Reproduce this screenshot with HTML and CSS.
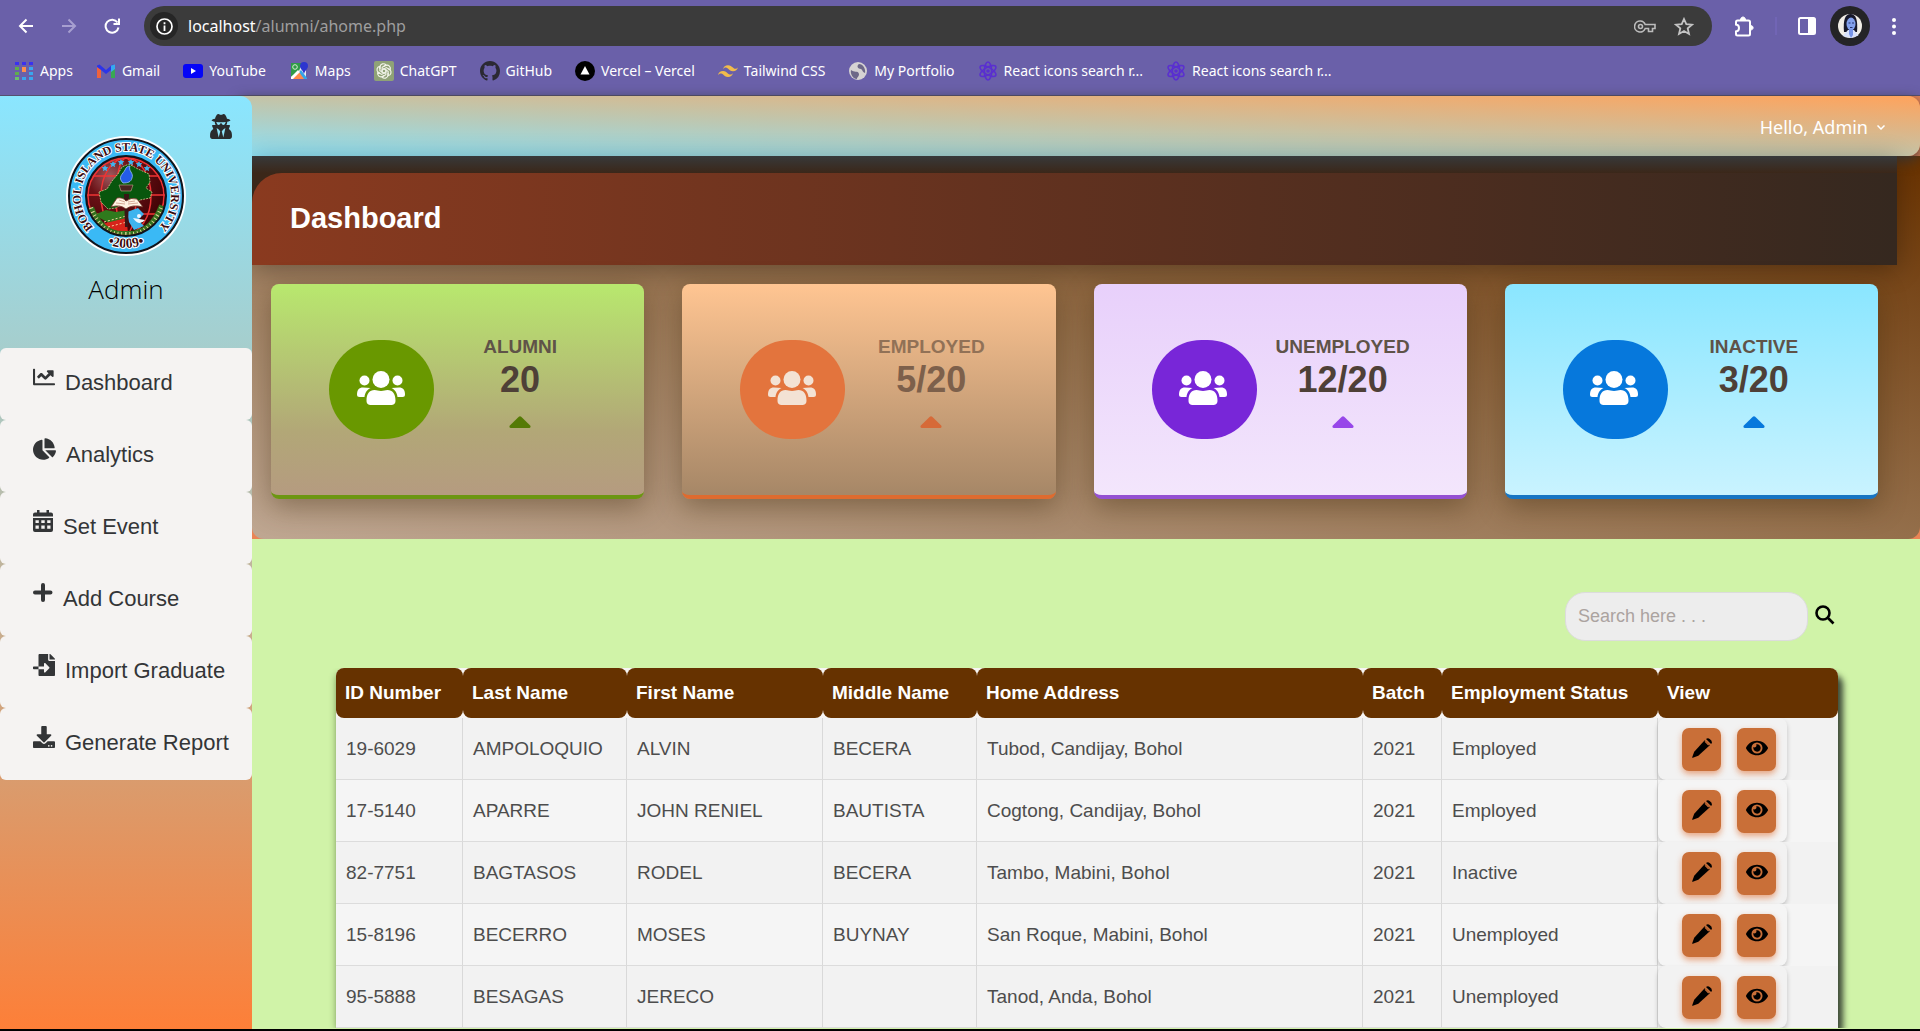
FILE: index.html
```html
<!DOCTYPE html>
<html lang="en">
<head>
<meta charset="utf-8">
<meta name="viewport" content="width=device-width, initial-scale=1">
<title>Alumni Dashboard</title>
<link rel="stylesheet" href="styles.css">
</head>
<body>
<svg class="sprite" width="0" height="0" aria-hidden="true">
  <symbol id="people" viewBox="0 0 48 34">
    <circle cx="24" cy="8.500" r="8.500"/><circle cx="7.500" cy="9.500" r="5"/><circle cx="40.500" cy="9.500" r="5"/>
    <path d="M9.500 29.500C9.500 23 12.500 19 17.500 19C20 19 21 20 24 20S28 19 30.500 19C35.500 19 38.500 23 38.500 29.500C38.500 33 36.500 34 34 34H14C11.500 34 9.500 33 9.500 29.500Z"/>
    <path d="M13.500 17C9.500 19 8 22 7.500 26H2.500C.8 26 0 25.200 0 23.500C0 19 2 16.500 6 16.500Z"/>
    <path d="M34.500 17C38.500 19 40 22 40.500 26H45.500C47.200 26 48 25.200 48 23.500C48 19 46 16.500 42 16.500Z"/>
  </symbol>
  <symbol id="caret" viewBox="0 0 22 12"><path d="M9.800.7Q11-.4 12.200.7L21.400 9.700Q22 12 20 12H2Q0 12 .6 9.700Z"/></symbol>
  <symbol id="pen" viewBox="0 0 20 20"><path d="M14 .9L16.500 3.400L19.100 6Q20.600 4 19 2.300L17.700 1Q16-.5 14 .9Z"/><path d="M12.700 2.200L17.800 7.300L6.300 17.800L.8 19.800Q0 20 .2 19.200L2.200 13.700Z"/><path d="M13 3.300L16.700 7" stroke="#c96f38" stroke-width="1.200"/></symbol>
  <symbol id="eye" viewBox="0 0 576 512"><path d="M572.520 241.400C518.290 135.590 410.930 64 288 64S57.680 135.640 3.480 241.410a32.350 32.350 0 0 0 0 29.190C57.710 376.410 165.070 448 288 448s230.320-71.640 284.520-177.410a32.350 32.350 0 0 0 0-29.190zM288 400a144 144 0 1 1 144-144 143.930 143.930 0 0 1-144 144zm0-240a95.310 95.310 0 0 0-25.310 3.790 47.850 47.850 0 0 1-66.900 66.900A95.780 95.780 0 1 0 288 160z"/></symbol>
  <symbol id="atom" viewBox="0 0 20 20"><g fill="none" stroke="#5a2fd0" stroke-width="1.600"><ellipse cx="10" cy="10" rx="3.600" ry="9"/><ellipse cx="10" cy="10" rx="3.600" ry="9" transform="rotate(60 10 10)"/><ellipse cx="10" cy="10" rx="3.600" ry="9" transform="rotate(120 10 10)"/></g><circle cx="10" cy="10" r="1.800" fill="#5a2fd0"/></symbol>
</svg>

<header class="chrome">
  <div class="toolbar">
    <div class="history">
      <button class="tool" aria-label="Back"><svg width="16" height="16" viewBox="0 0 16 16" fill="none" stroke="#fff" stroke-width="2"><path d="M15 8H2M8.500 1.500L2 8L8.500 14.500"/></svg></button>
      <button class="tool" aria-label="Forward"><svg width="16" height="16" viewBox="0 0 16 16" fill="none" stroke="#a79fd0" stroke-width="2"><path d="M1 8H14M7.500 1.500L14 8L7.500 14.500"/></svg></button>
      <button class="tool" aria-label="Reload"><svg width="16" height="16" viewBox="0 0 16 16" fill="none" stroke="#fff" stroke-width="2"><path d="M13.500 4.500A6.500 6.500 0 1 0 14.500 9.500"/><path d="M15 .5V6H9.500"/></svg></button>
    </div>
    <div class="omnibox">
      <button class="site-info" aria-label="Site information"><svg width="17" height="17" viewBox="0 0 17 17"><circle cx="8.500" cy="8.500" r="7.500" fill="none" stroke="#fff" stroke-width="1.700"/><path d="M7.600 7.500h1.800V13H7.600zM7.600 4.300h1.800v1.900H7.600z" fill="#fff"/></svg></button>
      <div class="url" role="textbox" aria-label="Address">localhost<span class="path">/alumni/ahome.php</span></div>
      <button class="tool" aria-label="Passwords"><svg width="22" height="13" viewBox="0 0 22 13" fill="none" stroke="#bcbcbc" stroke-width="1.600"><path d="M6.500 1A5.500 5.500 0 1 0 11.200 8.500H14.500V11.500H18.500V8.500H21V4.500H11.200A5.500 5.500 0 0 0 6.500 1Z"/><circle cx="6.500" cy="6.500" r="2"/></svg></button>
      <button class="tool" aria-label="Bookmark"><svg width="20" height="19" viewBox="0 0 20 19" fill="none" stroke="#c4c4c4" stroke-width="1.800"><path d="M10 2L12.300 7.100L18 7.700L13.700 11.400L15 17L10 14L5 17L6.300 11.400L2 7.700L7.700 7.100Z"/></svg></button>
    </div>
    <div class="extras">
      <button class="tool" aria-label="Extensions"><svg width="20" height="21" viewBox="0 0 20 21" fill="none" stroke="#fff" stroke-width="2"><path d="M3.500 4.500H14.500Q16 4.500 16 6V18Q16 19.500 14.500 19.500H3.500Q2 19.500 2 18V15.500C6 15 6 9 2 8.500V6Q2 4.500 3.500 4.500Z"/><path d="M6.500 4C6.500 0 11.500 0 11.500 4ZM16.500 9.500C20 9.500 20 14 16.500 14Z" fill="#fff" stroke-width="1"/></svg></button>
      <span class="divider"></span>
      <button class="tool" aria-label="Side panel"><svg width="18" height="18" viewBox="0 0 18 18"><rect x="1" y="1" width="16" height="16" rx="1.500" fill="none" stroke="#fff" stroke-width="2"/><path d="M10 1h7v16h-7z" fill="#fff"/></svg></button>
      <button class="tool" aria-label="Profile"><svg width="40" height="40" viewBox="0 0 40 40"><circle cx="20" cy="20" r="20" fill="#242426"/><circle cx="20" cy="20" r="12" fill="#f1eee6"/><path d="M14 26C13 14 15 8 20.500 8S28 14 27 26Z" fill="#16182a"/><path d="M12.500 30L18 24L24 24L28.500 29.500L21 32Z" fill="#d9e2fb"/><ellipse cx="21" cy="18" rx="4.500" ry="6.500" fill="#82a0ec"/><path d="M19 23H23V29L21 32L19 28Z" fill="#7895e8"/><path d="M18.500 17h2M22 17h2M20 21.500h2.500" stroke="#23306e" stroke-width="1"/></svg></button>
      <button class="tool" aria-label="Menu"><svg width="4" height="17" viewBox="0 0 4 17" fill="#fff"><circle cx="2" cy="2" r="2"/><circle cx="2" cy="8.500" r="2"/><circle cx="2" cy="15" r="2"/></svg></button>
    </div>
  </div>
  <nav class="bookmarks" aria-label="Bookmarks">
    <a href="#"><svg width="20" height="18" viewBox="0 0 20 18"><path d="M1 0h4v3H1zM8 0h4v3H8zM15 0h4v3h-4z" fill="#3a31f0"/><path d="M1 5h4v3H1zM1 10h4v3H1z" fill="#5fae4b"/><path d="M8 5h4v5H8z" fill="#ff8f4d"/><path d="M15 5h4v3h-4zM15 10h4v3h-4zM15 15h4v3h-4zM8 15h4v3H8z" fill="#3aa6ee"/><path d="M1 15h4v3H1z" fill="#6cc06c"/></svg>Apps</a>
    <a href="#"><svg width="20" height="18" viewBox="0 0 20 18"><path d="M1 3.500V16H5V8L10 12L15 8V16H19V4L16.500 2.500L10 8L3.500 2.500Z" fill="#2d35e8"/><path d="M1 5L5 8V16H1Z" fill="#f0623c"/><path d="M15 8L19 5V16H15Z" fill="#39a853"/><path d="M15 3.500L19 2.500V7L15 10Z" fill="#36a9f0"/></svg>Gmail</a>
    <a href="#"><svg width="20" height="18" viewBox="0 0 20 18"><rect y="2" width="20" height="14" rx="3" fill="#0505f7"/><path d="M8 6L13 9L8 12Z" fill="#fff"/></svg>YouTube</a>
    <a href="#"><svg width="20" height="18" viewBox="0 0 20 18"><path d="M2 1H17V17H2Z" fill="#e8eef4"/><path d="M2 1H13L10 9L2 15Z" fill="#2f9b48"/><path d="M2 17L10 9L17 17Z" fill="#ff8a4a"/><path d="M12 8L18 16V17H15L10 10Z" fill="#35a5ea"/><path d="M2 15L9 8L11 10L4 17H2Z" fill="#fff"/><path d="M15 0A4 4 0 0 1 19 4C19 7 16 8 15 12C14 8 11 7 11 4A4 4 0 0 1 15 0Z" fill="#2d35cf"/><circle cx="6" cy="5" r="2.300" fill="none" stroke="#d8f0d0"/></svg>Maps</a>
    <a href="#"><svg width="20" height="20" viewBox="0 0 20 20"><rect width="20" height="20" rx="2" fill="#8fa276"/><g fill="none" stroke="#f1f3e8" stroke-width="1.200"><path id="petal" d="M6 8V5.800A3.400 3.400 0 0 1 12 4L8.200 6.300V12"/><use href="#petal" transform="rotate(60 10 10)"/><use href="#petal" transform="rotate(120 10 10)"/><use href="#petal" transform="rotate(180 10 10)"/><use href="#petal" transform="rotate(240 10 10)"/><use href="#petal" transform="rotate(300 10 10)"/></g></svg>ChatGPT</a>
    <a href="#"><svg width="20" height="20" viewBox="0 0 16 16"><path fill="#2b2933" d="M8 0C3.580 0 0 3.580 0 8c0 3.540 2.290 6.530 5.470 7.590.4.070.55-.17.55-.38 0-.19-.01-.82-.01-1.490-2.010.37-2.530-.49-2.690-.94-.09-.23-.48-.94-.82-1.130-.28-.15-.68-.52-.01-.53.63-.01 1.080.58 1.230.82.720 1.210 1.870.87 2.330.66.070-.52.280-.87.510-1.070-1.780-.2-3.640-.89-3.640-3.950 0-.87.310-1.590.820-2.150-.08-.2-.36-1.020.080-2.120 0 0 .670-.21 2.200.82.640-.18 1.320-.27 2-.27s1.360.09 2 .27c1.530-1.040 2.200-.82 2.200-.82.440 1.100.160 1.920.080 2.120.510.560.820 1.270.820 2.150 0 3.070-1.870 3.750-3.650 3.950.290.250.540.730.540 1.480 0 1.070-.01 1.930-.01 2.200 0 .210.150.460.550.380A8.010 8.010 0 0 0 16 8c0-4.420-3.580-8-8-8z"/></svg>GitHub</a>
    <a href="#"><svg width="20" height="20" viewBox="0 0 20 20"><circle cx="10" cy="10" r="10" fill="#000"/><path d="M10 5L14.500 13.500H5.500Z" fill="#fff"/></svg>Vercel – Vercel</a>
    <a href="#"><svg width="20" height="20" viewBox="0 0 24 24"><path fill="#f2bc4b" d="M12 5C8.800 5 6.800 6.600 6 9.800C7.200 8.200 8.600 7.600 10.200 8C11.100 8.230 11.760 8.890 12.490 9.630C13.670 10.830 15.040 12.200 18 12.200C21.200 12.200 23.200 10.600 24 7.400C22.800 9 21.400 9.600 19.800 9.200C18.900 8.970 18.240 8.310 17.510 7.570C16.330 6.370 14.960 5 12 5ZM6 12C2.800 12 .8 13.600 0 16.800C1.200 15.200 2.600 14.600 4.200 15C5.100 15.230 5.760 15.890 6.490 16.630C7.670 17.830 9.040 19.200 12 19.200C15.200 19.200 17.200 17.600 18 14.400C16.800 16 15.400 16.600 13.800 16.200C12.900 15.970 12.240 15.310 11.510 14.570C10.330 13.370 8.960 12 6 12Z"/></svg>Tailwind CSS</a>
    <a href="#"><svg width="20" height="20" viewBox="0 0 20 20"><circle cx="10" cy="10" r="9" fill="#d6d3d3"/><path d="M3 9C6 12 10 9 11 13C11 16 9 16 9 18C5 18 2 13 3 9ZM11 3C8 5 10 8 13 8C15 9 14 11 17 12C18 8 15 3 11 3Z" fill="#6d6888"/></svg>My Portfolio</a>
    <a href="#"><svg width="20" height="20"><use href="#atom"/></svg>React icons search r...</a>
    <a href="#"><svg width="20" height="20"><use href="#atom"/></svg>React icons search r...</a>
  </nav>
</header>

<div class="page">
  <aside class="sidebar">
    <div class="profile">
      <svg class="agent" width="22" height="25" viewBox="0 0 448 512" fill="#2a2c2e"><path d="M383.900 308.300l23.900-62.600c4-10.500-3.700-21.700-15-21.700h-58.500c11-18.900 17.800-40.600 17.800-64v-.3c39.200-7.800 64-19.100 64-31.700 0-13.300-27.300-25.100-70.100-33-9.200-32.800-27-65.800-40.600-82.800-9.500-11.900-25.900-15.600-39.500-8.800l-27.600 13.800c-9 4.500-19.600 4.500-28.600 0L182.100 3.400c-13.600-6.800-30-3.100-39.500 8.800-13.500 17-31.400 50-40.600 82.800-42.700 7.900-70 19.700-70 33 0 12.600 24.800 23.900 64 31.700v.3c0 23.400 6.800 45.100 17.800 64H56.300c-11.500 0-19.200 11.700-14.700 22.300l25.800 60.200C27.300 329.800 0 372.700 0 422.400v44.800C0 491.900 20.100 512 44.800 512h358.400c24.700 0 44.800-20.100 44.800-44.800v-44.800c0-48.400-25.800-90.400-64.100-114.100zM176 480l-41.600-192 49.600 32 24 40-32 120zm96 0l-32-120 24-40 49.600-32L272 480zm41.700-298.500c-3.900 11.900-7 24.600-16.500 33.400-10.100 9.300-48 22.400-64-25-2.800-8.400-15.400-8.400-18.300 0-17 50.200-56 32.400-64 25-9.500-8.800-12.700-21.500-16.500-33.400-.8-2.500-6.300-5.700-6.300-5.800v-10.800c28.300 3.600 61 5.800 96 5.800s67.700-2.100 96-5.800v10.800c-.1.1-5.600 3.200-6.400 5.800z"/></svg>
      <svg class="seal" width="120" height="120" viewBox="0 0 120 120" role="img" aria-label="Bohol Island State University seal">
        <defs>
          <radialGradient id="globe" cx=".3" cy=".25" r=".7"><stop offset="0" stop-color="#9c5a5e"/><stop offset=".4" stop-color="#6b1116"/><stop offset="1" stop-color="#450407"/></radialGradient>
          <clipPath id="disc"><circle cx="60" cy="60" r="39"/></clipPath>
          <path id="ring-top" d="M36.700 98.800A45.200 45.200 0 1 1 83.300 98.800"/>
          <path id="ring-bottom" d="M20 93A52 52 0 0 0 100 93"/>
        </defs>
        <circle cx="60" cy="60" r="60" fill="#fff"/>
        <circle cx="60" cy="60" r="57" fill="#3ab9f5" stroke="#10141c" stroke-width="2"/>
        <circle cx="60" cy="60" r="40" fill="url(#globe)" stroke="#10141c" stroke-width="2"/>
        <g clip-path="url(#disc)">
          <g fill="none" stroke="#ee3434" stroke-width="1.500"><circle cx="60" cy="60" r="38"/><ellipse cx="60" cy="60" rx="25" ry="38"/><ellipse cx="60" cy="60" rx="10" ry="38"/><path d="M20 40H100M20 59H100M20 78H100"/></g>
          <path d="M33 56L41 53L46 45L52 38L56 31L63 28L72 33L83 38L84 46L80 52L86 56L84 62L74 64L68 70L57 67L50 72L42 73L35 66Z" fill="#08560d" stroke="#e7e3a3" stroke-width=".7" stroke-dasharray="2 1"/>
          <path d="M28 79L40 74L50 76L62 74V86L45 88Z" fill="#2f7a1d"/>
          <path d="M36 88L60 82L62 96L48 98Z" fill="#d7241b"/>
          <path d="M61 76L72 72L78 78L72 84L78 90L68 94L63 86Z" fill="#3fb4ee"/>
          <path d="M24 72Q35 101 60 99Q85 101 97 70" fill="none" stroke="#32701e" stroke-width="8"/>
          <path d="M24 72Q35 101 60 99Q85 101 97 70" fill="none" stroke="#e3d79b" stroke-width="6" stroke-dasharray="1 3"/>
          <path d="M38 86L60 80M42 91L61 86" stroke="#f8cfa0" stroke-dasharray="2 2"/>
          <path d="M58 58H63L62 91H59Z" fill="#3a1516"/>
          <path d="M53 49H67L65 55H55Z" fill="#4a2420" stroke="#d8c3a3" stroke-width=".5"/>
          <path d="M57 47C51 41 57 38 59 34C60 31 62 30 64 30C62 35 68 37 66 42C65 46 62 47 57 47Z" fill="#245ce9" stroke="#acd2ff" stroke-width=".7"/>
          <path d="M45 71L51 62Q57 61 60 65Q65 61 71 63L77 71Q66 68 60 73Q54 68 45 71Z" fill="#fff4e4" stroke="#6b2b20" stroke-width=".8"/>
          <path d="M50 67L59 68M62 68L72 67M53 64L59 66M62 66L69 65" stroke="#c58d79" stroke-width=".7"/>
          <path d="M67 82Q73 91 79 84Z" fill="#eef6ff"/><circle cx="73" cy="80" r="2" fill="#eef6ff"/>
          <g fill="#42b4ee"><path id="star" d="M39 29l1 2 2.300.3-1.700 1.600.5 2.300-2.100-1.100-2.100 1.100.5-2.300-1.700-1.600L38 31z"/><use href="#star" x="8" y="-4"/><use href="#star" x="16" y="-6"/><use href="#star" x="26" y="-6"/><use href="#star" x="34" y="-4"/><use href="#star" x="42"/></g>
        </g>
        <g class="seal-text"><text class="seal-name"><textPath href="#ring-top" startOffset="50%" text-anchor="middle">BOHOL ISLAND STATE UNIVERSITY</textPath></text>
        <text class="seal-year"><textPath href="#ring-bottom" startOffset="50%" text-anchor="middle">•2009•</textPath></text></g>
      </svg>
      <p class="who">Admin</p>
    </div>
    <nav class="menu" aria-label="Main">
      <a href="#"><svg width="22" height="22" viewBox="0 0 512 512"><path d="M496 400H48V80c0-8.840-7.160-16-16-16H16C7.160 64 0 71.160 0 80v336c0 17.670 14.330 32 32 32h464c8.840 0 16-7.160 16-16v-16c0-8.840-7.160-16-16-16zM464 96H345.940c-21.380 0-32.090 25.850-16.970 40.970l32.400 32.400L288 242.750l-73.370-73.370c-12.500-12.500-32.760-12.500-45.250 0l-68.690 68.690c-6.250 6.250-6.250 16.380 0 22.630l22.620 22.620c6.250 6.250 16.380 6.250 22.630 0L192 237.250l73.370 73.370c12.500 12.500 32.760 12.500 45.250 0l96-96 32.400 32.400c15.120 15.120 40.970 4.410 40.970-16.970V112c.01-8.840-7.150-16-15.990-16z"/></svg><span>Dashboard</span></a>
      <a href="#"><svg width="23" height="22" viewBox="0 0 544 512"><path d="M527.790 288H290.500l158.030 158.030c6.040 6.040 15.980 6.530 22.190.68 38.700-36.460 65.320-85.610 73.130-140.860 1.340-9.460-6.510-17.850-16.060-17.850zm-15.830-64.800C503.720 103.740 408.260 8.280 288.800.04 279.680-.59 272 7.100 272 16.240V240h223.770c9.140 0 16.820-7.680 16.190-16.800zM224 288V50.710c0-9.550-8.390-17.400-17.840-16.060C86.990 51.490-4.100 155.600.14 280.370 4.500 408.510 114.830 513.590 243.030 511.980c50.400-.63 96.970-16.870 135.260-44.030 7.900-5.600 8.420-17.230 1.570-24.080L224 288z"/></svg><span>Analytics</span></a>
      <a href="#"><svg width="20" height="22" viewBox="0 0 20 22"><path fill-rule="evenodd" d="M4 0H6.500V2.500H13.500V0H16V2.500H18Q20 2.500 20 4.500V6.500H0V4.500Q0 2.500 2 2.500H4ZM0 8H20V20Q20 22 18 22H2Q0 22 0 20ZM2.500 10.200V13H5.800V10.200ZM8.300 10.200V13H11.700V10.200ZM14.200 10.200V13H17.500V10.200ZM2.500 15.500V18.800H5.800V15.500ZM8.300 15.500V18.800H11.700V15.500ZM14.200 15.500V18.800H17.500V15.500Z"/></svg><span>Set Event</span></a>
      <a href="#"><svg width="20" height="22" viewBox="0 0 20 22" fill="none" stroke="#333537" stroke-width="4" stroke-linecap="round"><path d="M10 3V18M2 10.500H17.500"/></svg><span>Add Course</span></a>
      <a href="#"><svg width="22" height="22" viewBox="0 0 512 512"><path d="M16 288c-8.800 0-16 7.200-16 16v32c0 8.800 7.200 16 16 16h112v-64zm489-183L407.100 7c-4.500-4.500-10.600-7-17-7H384v128h128v-6.100c0-6.300-2.500-12.400-7-16.900zm-153 31V0H152c-13.300 0-24 10.700-24 24v264h128v-65.200c0-14.300 17.300-21.400 27.400-11.300L379 308c6.600 6.700 6.600 17.400 0 24l-95.700 96.400c-10.100 10.100-27.400 3-27.400-11.300V352H128v136c0 13.300 10.700 24 24 24h336c13.300 0 24-10.700 24-24V160H376c-13.200 0-24-10.800-24-24z"/></svg><span>Import Graduate</span></a>
      <a href="#"><svg width="22" height="22" viewBox="0 0 512 512"><path d="M216 0h80c13.300 0 24 10.700 24 24v168h87.700c17.800 0 26.700 21.500 14.100 34.100L269.700 378.300c-7.500 7.500-19.800 7.500-27.300 0L90.100 226.100c-12.600-12.600-3.700-34.100 14.100-34.100H192V24c0-13.300 10.700-24 24-24zm296 376v112c0 13.300-10.700 24-24 24H24c-13.300 0-24-10.700-24-24V376c0-13.300 10.700-24 24-24h146.700l49 49c20.100 20.100 52.500 20.100 72.600 0l49-49H488c13.300 0 24 10.700 24 24zm-124 88c0-11-9-20-20-20s-20 9-20 20 9 20 20 20 20-9 20-20zm64 0c0-11-9-20-20-20s-20 9-20 20 9 20 20 20 20-9 20-20z"/></svg><span>Generate Report</span></a>
    </nav>
  </aside>

  <main class="main">
    <div class="topbar"><button class="account">Hello, Admin <svg width="8" height="5" viewBox="0 0 8 5" fill="none" stroke="#fff" stroke-width="1.500"><path d="M.5.500L4 4L7.500.5"/></svg></button></div>
    <section class="hero">
      <div class="banner-strip"><h1 class="banner">Dashboard</h1></div>
      <div class="cards">
        <article class="card alumni"><div class="badge"><svg width="48" height="34"><use href="#people"/></svg></div><div class="stat"><h2>ALUMNI</h2><p>20</p><svg width="22" height="12"><use href="#caret"/></svg></div></article>
        <article class="card employed"><div class="badge"><svg width="48" height="34"><use href="#people"/></svg></div><div class="stat"><h2>EMPLOYED</h2><p>5/20</p><svg width="22" height="12"><use href="#caret"/></svg></div></article>
        <article class="card unemployed"><div class="badge"><svg width="48" height="34"><use href="#people"/></svg></div><div class="stat"><h2>UNEMPLOYED</h2><p>12/20</p><svg width="22" height="12"><use href="#caret"/></svg></div></article>
        <article class="card inactive"><div class="badge"><svg width="48" height="34"><use href="#people"/></svg></div><div class="stat"><h2>INACTIVE</h2><p>3/20</p><svg width="22" height="12"><use href="#caret"/></svg></div></article>
      </div>
    </section>
    <section class="records">
      <form class="search">
        <input type="text" placeholder="Search here . . ." aria-label="Search records">
        <button type="button" aria-label="Search"><svg width="20" height="20" viewBox="0 0 20 20" fill="none" stroke="#000" stroke-width="2.600"><circle cx="8" cy="8" r="6.500"/><path d="M12.500 12.500L18.500 18.500"/></svg></button>
      </form>
      <table class="grid">
        <colgroup><col class="c-id"><col class="c-last"><col class="c-first"><col class="c-middle"><col class="c-address"><col class="c-batch"><col class="c-status"><col class="c-view"></colgroup>
        <thead><tr><th>ID Number</th><th>Last Name</th><th>First Name</th><th>Middle Name</th><th>Home Address</th><th>Batch</th><th>Employment Status</th><th>View</th></tr></thead>
        <tbody>
          <tr><td>19-6029</td><td>AMPOLOQUIO</td><td>ALVIN</td><td>BECERA</td><td>Tubod, Candijay, Bohol</td><td>2021</td><td>Employed</td><td><div class="actions"><button aria-label="Edit"><svg width="20" height="20"><use href="#pen"/></svg></button><button aria-label="View"><svg width="22" height="20"><use href="#eye"/></svg></button></div></td></tr>
          <tr><td>17-5140</td><td>APARRE</td><td>JOHN RENIEL</td><td>BAUTISTA</td><td>Cogtong, Candijay, Bohol</td><td>2021</td><td>Employed</td><td><div class="actions"><button aria-label="Edit"><svg width="20" height="20"><use href="#pen"/></svg></button><button aria-label="View"><svg width="22" height="20"><use href="#eye"/></svg></button></div></td></tr>
          <tr><td>82-7751</td><td>BAGTASOS</td><td>RODEL</td><td>BECERA</td><td>Tambo, Mabini, Bohol</td><td>2021</td><td>Inactive</td><td><div class="actions"><button aria-label="Edit"><svg width="20" height="20"><use href="#pen"/></svg></button><button aria-label="View"><svg width="22" height="20"><use href="#eye"/></svg></button></div></td></tr>
          <tr><td>15-8196</td><td>BECERRO</td><td>MOSES</td><td>BUYNAY</td><td>San Roque, Mabini, Bohol</td><td>2021</td><td>Unemployed</td><td><div class="actions"><button aria-label="Edit"><svg width="20" height="20"><use href="#pen"/></svg></button><button aria-label="View"><svg width="22" height="20"><use href="#eye"/></svg></button></div></td></tr>
          <tr><td>95-5888</td><td>BESAGAS</td><td>JERECO</td><td></td><td>Tanod, Anda, Bohol</td><td>2021</td><td>Unemployed</td><td><div class="actions"><button aria-label="Edit"><svg width="20" height="20"><use href="#pen"/></svg></button><button aria-label="View"><svg width="22" height="20"><use href="#eye"/></svg></button></div></td></tr>
        </tbody>
      </table>
    </section>
  </main>
</div>
</body>
</html>
```
FILE: styles.css
```css
* { box-sizing: border-box; }

body {
  margin: 0;
  min-height: 100vh;
  display: flex;
  flex-direction: column;
  background: #000;
  font-family: "Liberation Sans", Arial, sans-serif;
}

button { border: 0; padding: 0; background: none; font: inherit; color: inherit; }
a { color: inherit; text-decoration: none; }
h1, h2, p { margin: 0; }
svg { display: block; flex: none; }
.sprite { position: absolute; }

/* Browser chrome */
.chrome {
  background: #6a60a9;
  border-bottom: 1px solid #56506f;
  font-family: "Noto Sans", sans-serif;
  color: #fff;
}
.toolbar { display: flex; align-items: center; padding: 6px 24px 0 18px; }
.history { display: flex; gap: 27px; width: 126px; }
.omnibox {
  flex: 1;
  height: 40px;
  display: flex;
  align-items: center;
  gap: 18px;
  padding: 0 18px 0 6px;
  border-radius: 20px;
  background: #3b3b3b;
}
.site-info {
  width: 28px;
  height: 28px;
  display: grid;
  place-items: center;
  border-radius: 50%;
  background: #262626;
}
.url { flex: 1; margin-left: -8px; font-size: 16px; line-height: 24px; }
.path { color: #9f9f9f; }
.extras { display: flex; align-items: center; margin-left: 22px; }
.divider { width: 2px; height: 18px; margin: 0 21px; background: #7165b5; }
.extras .tool:nth-of-type(2) { margin-right: 14px; }
.extras .tool:nth-of-type(3) { margin-right: 22px; }
.bookmarks {
  display: flex;
  gap: 23px;
  height: 49px;
  align-items: center;
  padding-left: 14px;
  font-size: 14px;
  line-height: 20px;
  white-space: nowrap;
}
.bookmarks a { display: flex; align-items: center; gap: 6px; }

/* Page */
.page { flex: 1; display: flex; margin-bottom: 2px; background: #ea8455; }

.sidebar {
  position: relative;
  z-index: 1;
  flex: none;
  width: 252px;
  border-top-right-radius: 12px;
  background: linear-gradient(#8ae6ff, #a5cfcf 26%, #d89d70 72%, #fd7f38);
}
.profile {
  position: relative;
  height: 252px;
  display: flex;
  flex-direction: column;
  align-items: center;
  padding-top: 40px;
}
.agent { position: absolute; top: 18px; right: 20px; }
.seal-text {
  font-family: "Liberation Serif", serif;
  font-weight: bold;
  fill: #3b0b10;
  stroke: #fff;
  stroke-width: 2px;
  paint-order: stroke;
}
.seal-name { font-size: 12px; }
.seal-year { font-size: 14px; }
.who {
  margin-top: 14px;
  font: 300 26px/38px "Open Sans", sans-serif;
  color: #000;
}
.menu a {
  display: flex;
  align-items: flex-start;
  gap: 10px;
  height: 72px;
  padding: 18px 20px 0 33px;
  border-radius: 6px;
  background: #f5f3f2;
  color: #333537;
  fill: #333537;
  font-size: 22px;
  line-height: 26px;
  white-space: nowrap;
}
.menu span { margin-top: 4px; }

.main { flex: 1; min-width: 0; display: flex; flex-direction: column; }
.topbar {
  position: relative;
  height: 60px;
  display: flex;
  align-items: center;
  justify-content: flex-end;
  margin-left: -12px;
  padding: 2px 35px 0 0;
  border-radius: 0 12px 12px 0;
  background: linear-gradient(to top right, #8ee1f5, #c5c3a6 50%, #ffa35c);
  box-shadow: 0 4px 14px #343739;
}
.account {
  display: flex;
  align-items: center;
  gap: 9px;
  font: 18px/24px "Noto Sans", sans-serif;
  color: #fff;
}
.hero {
  padding-bottom: 40px;
  border-radius: 0 0 12px 12px;
  background: linear-gradient(to top right, #bfa792, #946f4b 50%, #693200);
}
.banner-strip {
  position: relative;
  margin-right: 23px;
  padding-top: 17px;
  background: linear-gradient(#37393a, #3b2719 17px);
  box-shadow: 0 4px 24px rgba(0, 0, 0, .3);
}
.banner {
  padding: 29px 38px 30px;
  border-top-left-radius: 30px;
  background: linear-gradient(90deg, #8a3a1f, #35281f);
  color: #fff;
  font-size: 29px;
  line-height: 33px;
}
.cards {
  display: grid;
  grid-template-columns: repeat(4, 1fr);
  gap: 38px;
  padding: 19px 42px 0 19px;
}
.card {
  position: relative;
  height: 215px;
  display: grid;
  grid-template-columns: 105px 1fr;
  column-gap: 18px;
  padding: 47px 56px 0 58px;
  border-radius: 8px;
  border-bottom: 4px solid;
  box-shadow: 0 8px 28px rgba(60, 40, 10, .4);
}
.badge {
  height: 99px;
  margin-top: 9px;
  padding: 0 2px 4px 0;
  display: grid;
  place-items: center;
  border-radius: 50px;
  fill: #fff;
}
.stat { display: flex; flex-direction: column; align-items: center; padding-top: 5px; }
.stat h2 { color: #5f5348; font-size: 19px; line-height: 22px; }
.stat p { margin: 1px 0 15px; color: #4e4037; font-size: 36px; line-height: 42px; font-weight: bold; }
.alumni { background: linear-gradient(#b8e86e, #b2a777 70%, #b59b80); border-color: #6c9612; }
.alumni .badge { background: #699800; }
.alumni .stat svg { fill: #547a05; }
.employed { background: linear-gradient(#ffc592, #a68767); border-color: #de6b2f; }
.employed .badge { background: #e3743d; fill: #f3e2d4; }
.employed .stat h2 { color: #917156; }
.employed .stat p { color: #7d604b; }
.employed .stat svg { fill: #d66a38; }
.unemployed { background: linear-gradient(#e8d0fb, #f3e6fc); border-color: #9450d2; }
.unemployed .badge { background: #7826d8; }
.unemployed .stat svg { fill: #9747e9; }
.inactive { background: linear-gradient(#8ae6ff, #c9f3ff); border-color: #1775c3; }
.inactive .badge { background: #0678dc; }
.inactive .stat svg { fill: #0678dc; }

/* Records */
.records { flex: 1; padding: 53px 82px 0 84px; background: #d0f3a8; }
.search { display: flex; justify-content: flex-end; align-items: center; gap: 7px; padding-right: 3px; margin-bottom: 27px; }
.search input {
  width: 243px;
  height: 49px;
  padding: 0 12px;
  border: 1px solid #dcdcdc;
  border-radius: 20px;
  background: #ededed;
  font: 18px/24px "Liberation Sans", Arial, sans-serif;
}
.search input::placeholder { color: #aba3a0; opacity: 1; }
.search button { margin-bottom: 4px; }
.grid {
  width: 100%;
  table-layout: fixed;
  border-spacing: 0;
  border-radius: 8px;
  background: #f7f5f3;
  box-shadow: 5px 8px 6px #3e4a38, -1px 4px 6px rgba(60, 90, 30, .4);
  clip-path: inset(0 -20px 0 -20px);
  color: #4d4d4d;
  font-size: 19px;
  line-height: 22px;
}
.c-id { width: 127px; }
.c-last { width: 164px; }
.c-first { width: 196px; }
.c-middle { width: 154px; }
.c-address { width: 386px; }
.c-batch { width: 79px; }
.c-status { width: 216px; }
.c-view { width: 180px; }
.grid th {
  height: 50px;
  padding: 0 9px 1px;
  border-radius: 8px;
  background: #663200;
  color: #fff;
  text-align: left;
}
.grid td {
  height: 62px;
  padding: 0 10px;
  border-right: 1px solid #d9d9d9;
  border-bottom: 1px solid #dcdcdc;
}
.grid tbody tr { background: #f5f5f5; }
.grid tbody tr:nth-child(odd) { background: #f2f2f2; }
.grid td:last-child { padding: 0; border: 0; }
.actions {
  width: 129px;
  height: 62px;
  display: flex;
  gap: 16px;
  padding: 10px 0 0 24px;
  border-radius: 8px;
  box-shadow: 0 3px 5px rgba(0, 0, 0, .2);
}
.actions button {
  width: 39px;
  height: 43px;
  display: grid;
  place-items: center;
  padding-bottom: 3px;
  border-radius: 7px;
  background: #c96f38;
  box-shadow: 0 3px 6px rgba(222, 110, 50, .6);
}
```
